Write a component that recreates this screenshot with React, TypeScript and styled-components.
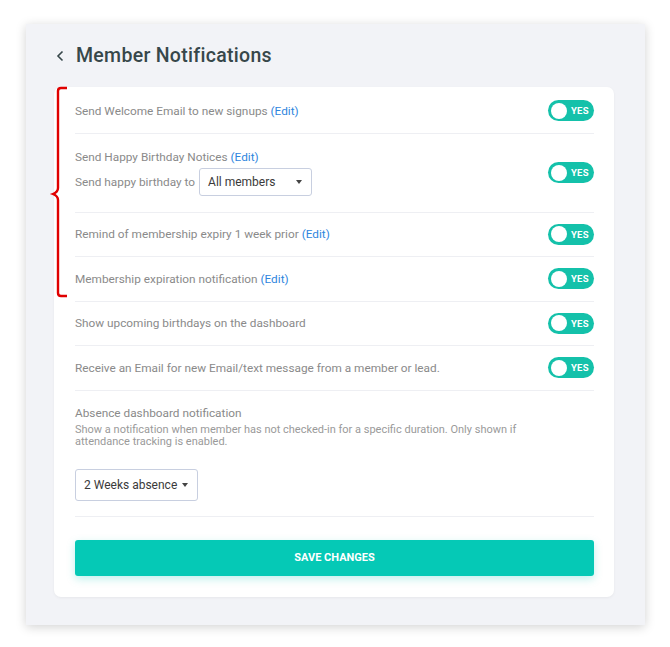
import React from 'react';
import styled, { createGlobalStyle } from 'styled-components';

const GlobalStyle = createGlobalStyle`
    body {
        margin: 0;
        background: #ffffff;
        font-family: Roboto, 'Liberation Sans', sans-serif;
    }
`;

type NotificationRow = {
    label: string;
    editable?: boolean;
};

const rowsAfterBirthday: NotificationRow[] = [
    { label: 'Remind of membership expiry 1 week prior', editable: true },
    { label: 'Membership expiration notification', editable: true },
    { label: 'Show upcoming birthdays on the dashboard' },
    { label: 'Receive an Email for new Email/text message from a member or lead.' },
];

const Page = styled.div`
    padding: 24px 25px 22px 26px;
`;

const Panel = styled.div`
    width: 619px;
    box-sizing: border-box;
    background: #f2f3f7;
    padding: 0 31px 28px 28px;
    box-shadow: 0 2px 10px rgba(0, 0, 0, 0.18);
`;

const Header = styled.div`
    display: flex;
    align-items: center;
    height: 63px;
    gap: 12px;
    padding-left: 2px;
`;

const Title = styled.h1`
    margin: 0;
    font-size: 19.5px;
    font-weight: 500;
    color: #37474a;
    letter-spacing: 0.3px;
`;

const Card = styled.div`
    position: relative;
    background: #ffffff;
    border-radius: 7px;
    padding: 2px 20px 21px 21px;
    box-shadow: 0 1px 3px rgba(0, 0, 0, 0.05);
`;

const Bracket = styled.svg`
    position: absolute;
    left: -3px;
    top: 0;
    overflow: visible;
`;

const Row = styled.div<{ $tall?: boolean }>`
    display: flex;
    align-items: center;
    justify-content: space-between;
    min-height: ${(p) => (p.$tall ? 79 : 44.5)}px;
    border-bottom: 1px solid #eeeff3;
    box-sizing: border-box;
`;

const Label = styled.span`
    font-size: 11.8px;
    color: #8a8a8a;
`;

const Edit = styled.a`
    color: #2f86de;
    cursor: pointer;
`;

const Stack = styled.div`
    display: flex;
    flex-direction: column;
    gap: 4px;
`;

const Inline = styled.div`
    display: flex;
    align-items: center;
    gap: 4px;
`;

const Select = styled.div<{ $width: number; $height: number }>`
    display: flex;
    align-items: center;
    justify-content: space-between;
    box-sizing: border-box;
    width: ${(p) => p.$width}px;
    height: ${(p) => p.$height}px;
    padding: 0 9px 0 8px;
    border: 1px solid #c8cfe0;
    border-radius: 3px;
    font-size: 12px;
    color: #3a3a3a;
    background: #ffffff;
`;

const Caret = styled.span`
    width: 0;
    height: 0;
    border-left: 3.5px solid transparent;
    border-right: 3.5px solid transparent;
    border-top: 4px solid #444;
`;

const Toggle = styled.div`
    display: flex;
    align-items: center;
    width: 46px;
    height: 21px;
    box-sizing: border-box;
    padding: 0 5px 0 3px;
    gap: 4px;
    border-radius: 11px;
    background: #14c1aa;
    flex-shrink: 0;
`;

const Knob = styled.span`
    width: 16px;
    height: 16px;
    border-radius: 50%;
    background: #ffffff;
`;

const ToggleText = styled.span`
    font-size: 9.5px;
    font-weight: 700;
    color: #ffffff;
    letter-spacing: 0.2px;
`;

const Section = styled.div`
    display: flex;
    flex-direction: column;
    align-items: flex-start;
    padding: 14px 0 15px;
    border-bottom: 1px solid #eeeff3;
`;

const SectionTitle = styled.span`
    font-size: 11.8px;
    color: #8a8a8a;
    line-height: 16px;
`;

const Description = styled.p`
    margin: 3px 0 21px;
    font-size: 11px;
    line-height: 12px;
    color: #9a9a9a;
    max-width: 450px;
`;

const SaveButton = styled.button`
    margin-top: 23px;
    width: 100%;
    height: 36px;
    border: none;
    border-radius: 3px;
    background: #05c9b6;
    color: #ffffff;
    font-family: Roboto, 'Liberation Sans', sans-serif;
    font-size: 11px;
    font-weight: 700;
    box-shadow: 0 3px 8px rgba(5, 201, 182, 0.25);
    cursor: pointer;
`;

const YesToggle = () => (
    <Toggle>
        <Knob />
        <ToggleText>YES</ToggleText>
    </Toggle>
);

const BackChevron = () => (
    <svg width="8" height="12" viewBox="0 0 8 12">
        <polyline points="6.5,1.5 2,6 6.5,10.5" fill="none" stroke="#37474a" strokeWidth="1.6" />
    </svg>
);

export default function App() {
    return (
        <Page>
            <GlobalStyle />
            <Panel>
                <Header>
                    <BackChevron />
                    <Title>Member Notifications</Title>
                </Header>
                <Card>
                    <Bracket width="20" height="212" viewBox="0 0 20 212">
                        <path
                            d="M16 1 H10 Q7 1 7 4 V101 Q7 105 2 107 Q7 109 7 113 V206 Q7 209 10 209 H16"
                            fill="none"
                            stroke="#e00000"
                            strokeWidth="2.4"
                        />
                    </Bracket>
                    <Row>
                        <Label>
                            Send Welcome Email to new signups <Edit>(Edit)</Edit>
                        </Label>
                        <YesToggle />
                    </Row>
                    <Row $tall>
                        <Stack>
                            <Label>
                                Send Happy Birthday Notices <Edit>(Edit)</Edit>
                            </Label>
                            <Inline>
                                <Label>Send happy birthday to</Label>
                                <Select $width={113} $height={28}>
                                    All members
                                    <Caret />
                                </Select>
                            </Inline>
                        </Stack>
                        <YesToggle />
                    </Row>
                    {rowsAfterBirthday.map((row) => (
                        <Row key={row.label}>
                            <Label>
                                {row.label}
                                {row.editable && (
                                    <>
                                        {' '}
                                        <Edit>(Edit)</Edit>
                                    </>
                                )}
                            </Label>
                            <YesToggle />
                        </Row>
                    ))}
                    <Section>
                        <SectionTitle>Absence dashboard notification</SectionTitle>
                        <Description>
                            Show a notification when member has not checked-in for a specific duration. Only shown if
                            attendance tracking is enabled.
                        </Description>
                        <Select $width={123} $height={32}>
                            2 Weeks absence
                            <Caret />
                        </Select>
                    </Section>
                    <SaveButton>SAVE CHANGES</SaveButton>
                </Card>
            </Panel>
        </Page>
    );
}
